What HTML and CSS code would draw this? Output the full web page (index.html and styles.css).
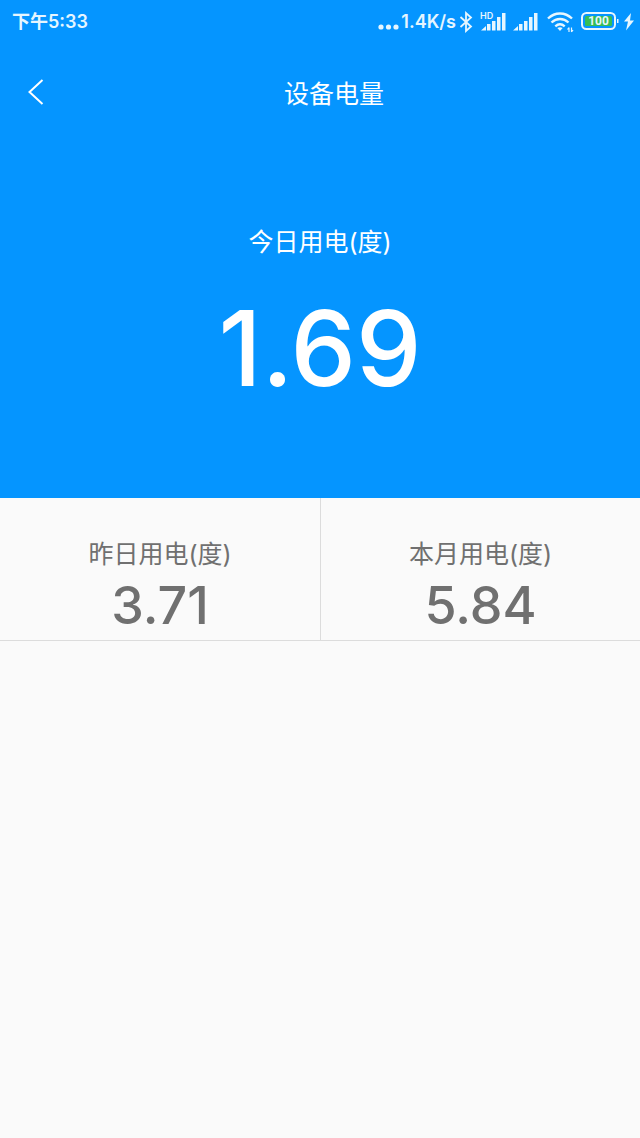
FILE: index.html
```html
<!DOCTYPE html>
<html lang="zh-CN">
<head>
<meta charset="utf-8">
<meta name="viewport" content="width=device-width, initial-scale=1">
<title>设备电量</title>
<link rel="stylesheet" href="styles.css">
</head>
<body>
<div class="hero">
  <div class="status">
    <span class="clock">下午5:33</span>
    <div class="indicators">
      <svg width="22" height="22" viewBox="0 0 22 22" fill="currentColor" aria-hidden="true"><circle cx="4" cy="16" r="2.6"/><circle cx="11.500" cy="16" r="2.6"/><circle cx="19" cy="16" r="2.6"/></svg>
      <span class="speed">1.4K/s</span>
      <svg class="bluetooth" width="14" height="22" viewBox="0 0 14 22" fill="none" stroke="currentColor" stroke-width="1.8" aria-hidden="true"><path d="M1.500 6 12 15.500 7 20V2l5 4.500L1.500 16"/></svg>
      <div class="signal-hd">
        <span class="hd">HD</span>
        <svg width="26" height="22" viewBox="0 0 26 22" fill="currentColor" aria-hidden="true"><path d="M1 19.500 6 15v4.500zM7 13h3.500v6.500H7zM12 10h3.500v9.500H12zM17 6h3.500v13.500H17zM22 2h3.500v17.500H22z"/></svg>
      </div>
      <svg class="signal" width="26" height="22" viewBox="0 0 26 22" fill="currentColor" aria-hidden="true"><path d="M1 19.500 6 15v4.500zM7 13h3.500v6.500H7zM12 10h3.500v9.500H12zM17 6h3.500v13.500H17zM22 2h3.500v17.500H22z"/></svg>
      <svg class="wifi" width="27" height="22" viewBox="0 0 27 22" fill="none" stroke="currentColor" stroke-width="2.400" aria-hidden="true"><path d="M1 7.500c7-6.700 17-6.700 24 0M4.500 11.500c5-4.700 12-4.700 17 0M8.300 15.300c3-2.600 6.400-2.600 9.400 0"/><path d="m10.300 17 2.700 3 2.700-3c-1.700-1.100-3.700-1.100-5.400 0Z" fill="currentColor" stroke="none"/><path d="M22 16.500v4.500M20.500 18.500l1.500-2M24.500 16.500V21M26 19l-1.500 2" stroke-width="1.200"/></svg>
      <div class="battery">
        <svg width="38" height="22" viewBox="0 0 38 22" aria-hidden="true"><rect x="1" y="2" width="33" height="16" rx="4.500" fill="none" stroke="currentColor" stroke-width="2"/><rect x="4" y="5" width="27" height="10" rx="1.500" fill="#35bd55"/><path d="M36 8h1.500v4H36z" fill="currentColor"/></svg>
        <span class="level">100</span>
      </div>
      <svg class="bolt" width="10" height="22" viewBox="0 0 10 22" fill="currentColor" aria-hidden="true"><path d="M7 2 0 10.500h4L2 19.500l8-10H6z"/></svg>
    </div>
  </div>
  <header class="topbar">
    <button class="back" type="button" aria-label="返回">
      <svg width="16" height="26" viewBox="0 0 16 26" fill="none" stroke="currentColor" stroke-width="2" aria-hidden="true"><path d="M14.500 1 1.500 13l13 12"/></svg>
    </button>
    <h1 class="title">设备电量</h1>
  </header>
  <section class="today">
    <h2 class="label">今日用电(度)</h2>
    <p class="today-value">1.69</p>
  </section>
</div>
<main class="totals">
  <section class="total">
    <h2 class="label">昨日用电(度)</h2>
    <p class="total-value">3.71</p>
  </section>
  <section class="total">
    <h2 class="label">本月用电(度)</h2>
    <p class="total-value">5.84</p>
  </section>
</main>
</body>
</html>
```
FILE: styles.css
```css
* { box-sizing: border-box; }

body {
  margin: 0;
  background: #fafafa;
  color: #707070;
  font-family: Inter, "Noto Sans CJK SC", sans-serif;
}

h1, h2, p { margin: 0; }

svg { display: block; flex: none; }

.hero {
  background: #0595ff;
  color: #fff;
  padding-bottom: 90px;
}

.status {
  display: flex;
  align-items: center;
  justify-content: space-between;
  height: 44px;
  padding: 0 6px 0 12px;
  color: #e6f6ff;
  font-size: 18px;
  font-weight: 600;
  line-height: 24px;
}

.indicators { display: flex; align-items: center; }

.speed { padding: 0 3px 0 2px; }

.signal-hd { position: relative; margin-left: 7px; }

.hd {
  position: absolute;
  top: 0;
  left: 0;
  font-size: 9px;
  line-height: 10px;
}

.signal { margin-left: 6px; }

.wifi { margin-left: 9px; }

.battery { position: relative; margin-left: 7px; }

.level {
  position: absolute;
  top: 0;
  left: 0;
  width: 35px;
  font-family: Roboto, sans-serif;
  font-size: 12px;
  font-weight: 700;
  line-height: 20px;
  text-align: center;
}

.bolt { margin-left: 5px; }

.topbar {
  display: flex;
  align-items: center;
  height: 96px;
  padding-right: 24px;
}

.back {
  display: flex;
  align-items: center;
  width: 52px;
  height: 52px;
  padding: 0 0 0 28px;
  border: 0;
  background: none;
  color: inherit;
}

.title, .label {
  font-size: 25px;
  font-weight: 400;
  line-height: 36px;
  text-align: center;
}

.title { flex: 1; padding-top: 3px; }

.today { padding-top: 84px; text-align: center; }

.today-value {
  padding-top: 28px;
  font-size: 104px;
  font-weight: 500;
  line-height: 120px;
}

.totals {
  display: grid;
  grid-template-columns: 1fr 1fr;
  border-bottom: 1px solid #dcdcdc;
}

.total { padding: 38px 0 2px; text-align: center; }

.total + .total { border-left: 1px solid #dcdcdc; }

.total-value {
  padding-top: 2px;
  font-size: 52px;
  font-weight: 500;
  line-height: 64px;
}
```
